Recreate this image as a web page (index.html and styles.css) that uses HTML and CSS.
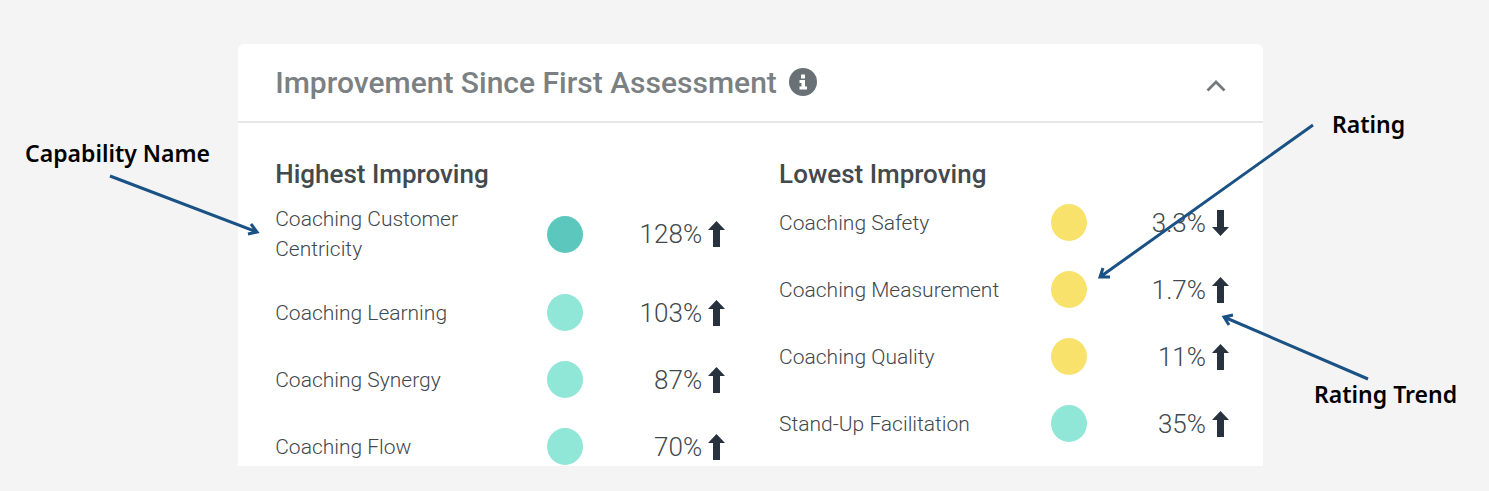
FILE: index.html
```html
<!DOCTYPE html>
<html lang="en">
<head>
    <meta charset="UTF-8">
    <meta name="viewport" content="width=device-width, initial-scale=1.0">
    <title>Improvement Since First Assessment</title>
    <link rel="stylesheet" href="styles.css">
</head>
<body>
    <!-- Icons shared by the rows -->
    <svg class="icon-defs" aria-hidden="true">
        <symbol id="arrow-up" viewBox="0 0 17 26">
            <path d="M8.500 0 L17 9 H12 V26 H5 V9 H0 Z"/>
        </symbol>
        <symbol id="arrow-down" viewBox="0 0 17 26">
            <path d="M8.500 26 L0 17 H5 V0 H12 V17 H17 Z"/>
        </symbol>
    </svg>

    <main class="page">
        <aside class="notes notes-left">
            <p class="note">Capability Name</p>
        </aside>

        <section class="card">
            <header class="card-header">
                <h1>Improvement Since First Assessment</h1>
                <button class="icon-button info" type="button" aria-label="More information">
                    <svg width="28" height="28" viewBox="0 0 28 28">
                        <circle cx="14" cy="14" r="14" fill="#697176"/>
                        <path d="M12 6.500h4v4h-4zM10.500 12h5.500v6.500h2v3h-7.500v-3h2v-3.500h-2z" fill="#fff"/>
                    </svg>
                </button>
                <button class="icon-button toggle" type="button" aria-label="Collapse" aria-expanded="true">
                    <svg width="20" height="12" viewBox="0 0 20 12">
                        <path d="M1.500 10.500 L10 2 L18.500 10.500" fill="none" stroke="#74797c" stroke-width="2.800"/>
                    </svg>
                </button>
            </header>

            <div class="card-body">
                <div class="column">
                    <h2 id="highest">Highest Improving</h2>
                    <table aria-labelledby="highest">
                        <tbody>
                            <tr>
                                <td class="name">Coaching Customer Centricity</td>
                                <td class="rating"><span class="dot dark-teal"></span></td>
                                <td class="trend"><div class="score">128%<svg class="arrow"><use href="#arrow-up"/></svg></div></td>
                            </tr>
                            <tr>
                                <td class="name">Coaching Learning</td>
                                <td class="rating"><span class="dot teal"></span></td>
                                <td class="trend"><div class="score">103%<svg class="arrow"><use href="#arrow-up"/></svg></div></td>
                            </tr>
                            <tr>
                                <td class="name">Coaching Synergy</td>
                                <td class="rating"><span class="dot teal"></span></td>
                                <td class="trend"><div class="score">87%<svg class="arrow"><use href="#arrow-up"/></svg></div></td>
                            </tr>
                            <tr>
                                <td class="name">Coaching Flow</td>
                                <td class="rating"><span class="dot teal"></span></td>
                                <td class="trend"><div class="score">70%<svg class="arrow"><use href="#arrow-up"/></svg></div></td>
                            </tr>
                        </tbody>
                    </table>
                </div>

                <div class="column">
                    <h2 id="lowest">Lowest Improving</h2>
                    <table aria-labelledby="lowest">
                        <tbody>
                            <tr>
                                <td class="name">Coaching Safety</td>
                                <td class="rating"><span class="dot yellow"></span></td>
                                <td class="trend"><div class="score">3.3%<svg class="arrow"><use href="#arrow-down"/></svg></div></td>
                            </tr>
                            <tr>
                                <td class="name">Coaching Measurement</td>
                                <td class="rating"><span class="dot yellow"></span></td>
                                <td class="trend"><div class="score">1.7%<svg class="arrow"><use href="#arrow-up"/></svg></div></td>
                            </tr>
                            <tr>
                                <td class="name">Coaching Quality</td>
                                <td class="rating"><span class="dot yellow"></span></td>
                                <td class="trend"><div class="score">11%<svg class="arrow"><use href="#arrow-up"/></svg></div></td>
                            </tr>
                            <tr>
                                <td class="name">Stand-Up Facilitation</td>
                                <td class="rating"><span class="dot teal"></span></td>
                                <td class="trend"><div class="score">35%<svg class="arrow"><use href="#arrow-up"/></svg></div></td>
                            </tr>
                        </tbody>
                    </table>
                </div>
            </div>
        </section>

        <aside class="notes notes-right">
            <p class="note note-rating">Rating</p>
            <p class="note">Rating Trend</p>
        </aside>

        <!-- Pointers from the notes to the card -->
        <svg class="pointers" viewBox="0 0 1489 491" aria-hidden="true">
            <path d="M110 176 L257 232 M251 224 L257 232 L248 234"/>
            <path d="M1313 125 L1100 277 M1103 268 L1100 277 L1110 277"/>
            <path d="M1368 379 L1224 317 M1233 315 L1224 317 L1229 325"/>
        </svg>
    </main>
</body>
</html>
```
FILE: styles.css
```css
* {
    box-sizing: border-box;
}

body {
    margin: 0;
    background-color: #f4f4f4;
    font-family: Roboto, "Noto Sans", sans-serif;
    color: #41484d;
}

h1, h2, p {
    margin: 0;
}

.icon-defs {
    display: none;
}

.page {
    position: relative;
    display: grid;
    grid-template-columns: 16% 1fr 226px;
    grid-template-rows: 100%;
    height: 100vh;
    padding: 44px 0 25px;
}

.notes {
    display: flex;
    flex-direction: column;
}

.notes-left {
    padding: 94px 0 0 25px;
}

.notes-right {
    gap: 240px;
    padding: 65px 0 0 51px;
}

.note {
    font-family: "Noto Sans", sans-serif;
    font-size: 23px;
    font-weight: 600;
    line-height: 30px;
    color: #000000;
    white-space: nowrap;
}

.note-rating {
    margin-left: 18px;
}

.card {
    background-color: #ffffff;
    border-radius: 6px 6px 0 0;
    overflow: hidden;
}

.card-header {
    display: flex;
    align-items: center;
    gap: 12px;
    height: 79px;
    padding: 0 37px;
    border-bottom: 2px solid #e6e7e8;
}

h1 {
    font-size: 30px;
    font-weight: 500;
    color: #7b8083;
}

.icon-button {
    display: flex;
    padding: 0;
    border: none;
    background: none;
    cursor: pointer;
}

.info {
    margin-bottom: 2px;
}

.toggle {
    margin-left: auto;
    margin-top: 6px;
}

.card-body {
    display: grid;
    grid-template-columns: 1fr 1fr;
    gap: 54px;
    padding: 36px 34px 0 37px;
}

h2 {
    font-size: 26px;
    font-weight: 500;
    line-height: 30px;
    color: #43494d;
}

table {
    width: 100%;
    table-layout: fixed;
    border-collapse: collapse;
}

td {
    padding: 15px 0;
    vertical-align: middle;
}

.name {
    width: 54%;
    font-size: 21px;
    font-weight: 300;
    line-height: 30px;
}

.rating {
    width: 21%;
}

.dot {
    display: block;
    width: 36px;
    height: 37px;
    margin: 0 auto;
    border-radius: 50%;
}

.dark-teal {
    background-color: #5cc8bd;
}

.teal {
    background-color: #90e6d7;
}

.yellow {
    background-color: #f8e26c;
}

.score {
    display: flex;
    justify-content: flex-end;
    align-items: center;
    gap: 6px;
    font-size: 26px;
    font-weight: 300;
    line-height: 30px;
}

.arrow {
    width: 17px;
    height: 26px;
    fill: #28323e;
}

.pointers {
    position: absolute;
    top: 0;
    left: 0;
    width: 100%;
    pointer-events: none;
}

.pointers path {
    fill: none;
    stroke: #1b5286;
    stroke-width: 3;
}
```
